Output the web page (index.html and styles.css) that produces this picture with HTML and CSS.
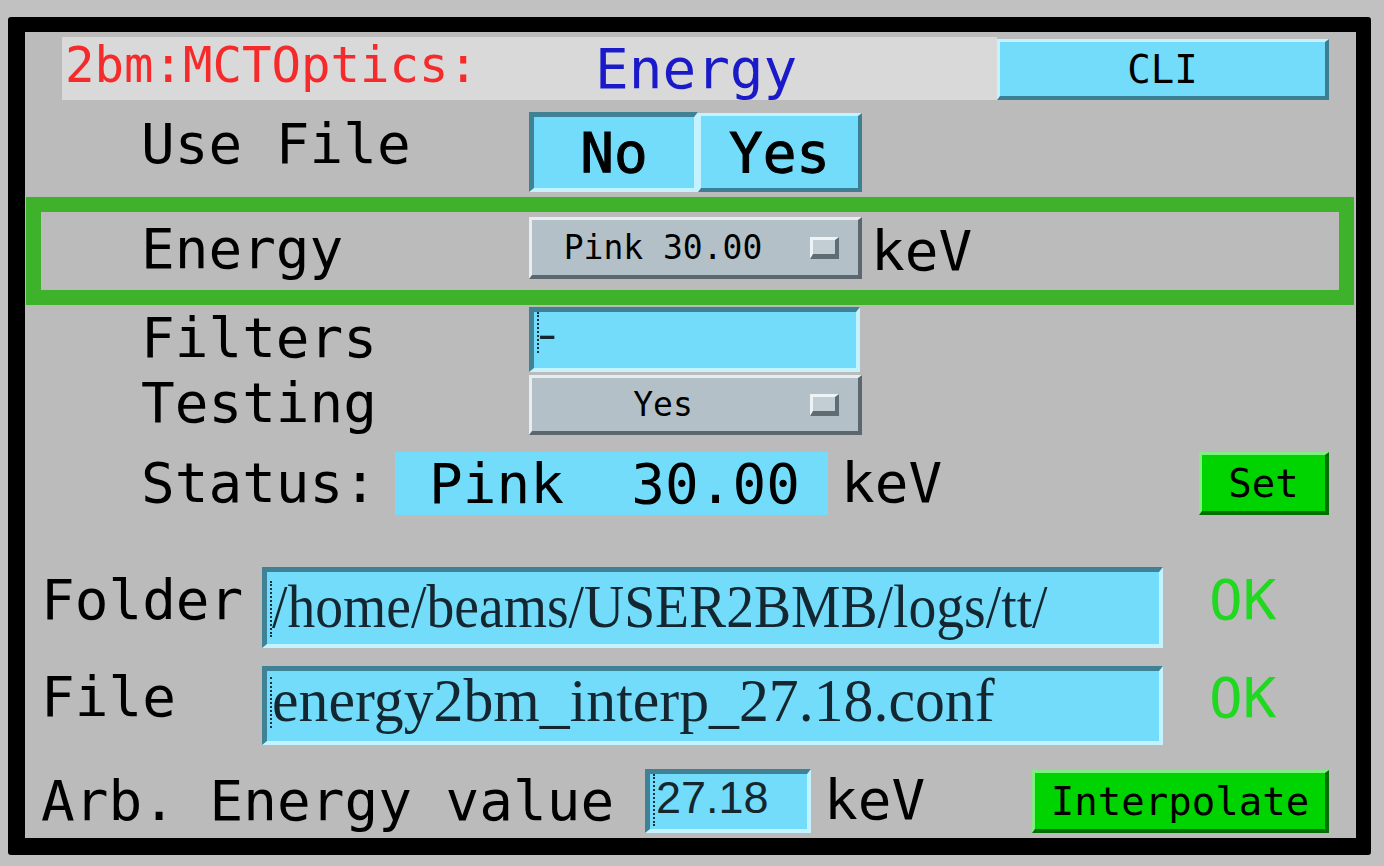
FILE: index.html
```html
<!DOCTYPE html>
<html>
<head>
<meta charset="utf-8">
<title>2bm:MCTOptics: Energy</title>
<link rel="stylesheet" href="styles.css">
</head>
<body>
<div class="frame">
  <div class="row row-title">
    <div class="title-bg">
      <span class="pv-name">2bm:MCTOptics:</span>
      <span class="title">Energy</span>
    </div>
    <div class="btn cyan raised cli">CLI</div>
  </div>

  <div class="row row-usefile">
    <div class="label lbl-col">Use File</div>
    <div class="btn cyan pressed choice no">No</div>
    <div class="btn cyan raised choice yes">Yes</div>
  </div>

  <div class="energy-box">
    <div class="label lbl-col">Energy</div>
    <div class="menu menu-energy"><span class="menu-text">Pink 30.00</span><span class="menu-ind"></span></div>
    <div class="label unit-energy">keV</div>
  </div>

  <div class="row row-filters">
    <div class="label lbl-col">Filters</div>
    <div class="entry cyan pressed entry-filters"><span class="cursor cursor-filters"></span><span class="dash">-</span></div>
  </div>

  <div class="row row-testing">
    <div class="label lbl-col">Testing</div>
    <div class="menu menu-testing"><span class="menu-text">Yes</span><span class="menu-ind"></span></div>
  </div>

  <div class="row row-status">
    <div class="label lbl-status">Status:</div>
    <div class="status-value">Pink  30.00</div>
    <div class="label unit-status">keV</div>
    <div class="btn green raised set">Set</div>
  </div>

  <div class="row row-folder">
    <div class="label lbl-path">Folder</div>
    <div class="entry cyan pressed entry-path"><span class="cursor cursor-folder"></span><span class="path-text folder-text">/home/beams/USER2BMB/logs/tt/</span></div>
    <div class="label ok">OK</div>
  </div>

  <div class="row row-file">
    <div class="label lbl-path">File</div>
    <div class="entry cyan pressed entry-file"><span class="cursor cursor-file"></span><span class="path-text file-text">energy2bm_interp_27.18.conf</span></div>
    <div class="label ok">OK</div>
  </div>

  <div class="row row-arb">
    <div class="label lbl-arb">Arb. Energy value</div>
    <div class="entry cyan pressed entry-arb"><span class="cursor cursor-arb"></span><span class="arb-text">27.18</span></div>
    <div class="label unit-arb">keV</div>
    <div class="btn green raised interp">Interpolate</div>
  </div>
</div>
</body>
</html>
```

FILE: styles.css
```css
html, body {
  margin: 0;
  padding: 0;
}
body {
  width: 1384px;
  height: 866px;
  overflow: hidden;
  background: #c1c1c1;
  font-family: "DejaVu Sans Mono", "Liberation Mono", monospace;
  color: #000;
}
.frame {
  margin: 17px 0 0 8px;
  width: 1331px;
  height: 806px;
  border-style: solid;
  border-color: #000;
  border-width: 15px 15px 17px 17px;
  border-radius: 3px;
  background: #bbbbbb;
}
.row {
  display: flex;
  align-items: flex-start;
}
.label {
  flex: none;
  font-size: 56px;
  line-height: 56px;
  white-space: pre;
}
.lbl-col {
  margin-left: 116px;
  width: 388px;
}

/* title row */
.row-title { height: 73px; }
.title-bg {
  flex: none;
  margin: 5px 0 0 37px;
  width: 935px;
  height: 63px;
  background: #d9d9d9;
  display: flex;
  align-items: flex-start;
}
.pv-name {
  flex: none;
  width: 530px;
  margin: 4px 0 0 3px;
  font-size: 49px;
  line-height: 49px;
  color: #f52a2a;
  white-space: pre;
}
.title {
  margin-top: 4px;
  font-size: 56px;
  line-height: 56px;
  color: #1a1ac8;
}

/* buttons */
.btn {
  flex: none;
  box-sizing: border-box;
  display: flex;
  align-items: center;
  justify-content: center;
  white-space: pre;
}
.cyan { background: #73dcfa; }
.raised.cyan {
  border-style: solid;
  border-width: 3px 4px 4px 3px;
  border-color: #c4f2ff #3d7f92 #3d7f92 #c4f2ff;
}
.pressed.cyan {
  border-style: solid;
  border-width: 5px 4px 4px 5px;
  border-color: #3f8296 #c4f2ff #c4f2ff #3f8296;
}
.green { background: #00d400; }
.raised.green {
  border-style: solid;
  border-width: 3px 4px 4px 3px;
  border-color: #80ee80 #007000 #007000 #80ee80;
}
.cli {
  margin-top: 7px;
  width: 332px;
  height: 61px;
  font-size: 39px;
}

/* use file */
.row-usefile { height: 90px; }
.row-usefile .label { margin-top: 11px; }
.choice {
  font-size: 56px;
  -webkit-text-stroke: 1px #000;
}
.no { margin-top: 7px; width: 169px; height: 80px; }
.yes { margin-top: 8px; width: 164px; height: 79px; }

/* energy box */
.energy-box {
  margin: 2px 0 0 1px;
  width: 1328px;
  height: 108px;
  box-sizing: border-box;
  border: 15px solid #3db22a;
  display: flex;
  align-items: flex-start;
}
.energy-box .lbl-col {
  margin-left: 100px;
  margin-top: 9px;
}
.menu {
  flex: none;
  box-sizing: border-box;
  display: flex;
  align-items: center;
  background: #b3c0c8;
  border-style: solid;
  border-width: 3px 4px 4px 3px;
  border-color: #e6eef2 #5a676e #5a676e #e6eef2;
}
.menu-text {
  flex: 1;
  text-align: center;
  padding-right: 16px;
  font-size: 33px;
  line-height: 33px;
  white-space: pre;
}
.menu-ind {
  flex: none;
  width: 29px;
  height: 22px;
  box-sizing: border-box;
  border-style: solid;
  border-width: 3px 4px 5px 3px;
  border-color: #eef4f6 #5f6c73 #5f6c73 #eef4f6;
  background: #c2ced4;
  margin-right: 19px;
}
.menu-energy { margin-top: 5px; width: 333px; height: 62px; }
.unit-energy { margin-left: 9px; margin-top: 11px; }

/* entries */
.entry {
  flex: none;
  box-sizing: border-box;
  display: flex;
  align-items: flex-start;
  padding-left: 3px;
  color: #142630;
}
.cursor {
  flex: none;
  width: 0;
  border-left: 2px dotted #16323c;
}
.path-text {
  flex: none;
  font-family: "Liberation Serif", "Times New Roman", serif;
  font-size: 62px;
  line-height: 56px;
  white-space: pre;
  transform-origin: 0 0;
}

/* filters */
.row-filters { height: 69px; }
.row-filters .label { margin-top: 5px; }
.entry-filters { margin-top: 2px; width: 331px; height: 65px; }
.cursor-filters { height: 41px; }
.dash {
  flex: none;
  font-family: "Liberation Serif", "Times New Roman", serif;
  font-size: 44px;
  line-height: 44px;
  margin-left: -1px;
  transform: scaleX(1.25);
  transform-origin: 0 0;
}

/* testing */
.row-testing { height: 66px; }
.row-testing .label { margin-top: 1px; }
.menu-testing { margin-top: 1px; width: 333px; height: 60px; }

/* status */
.row-status { height: 80px; }
.lbl-status {
  margin-left: 116px;
  width: 254px;
  margin-top: 15px;
}
.status-value {
  flex: none;
  box-sizing: border-box;
  margin-top: 12px;
  width: 433px;
  height: 63px;
  padding-left: 34px;
  background: #73dcfa;
  font-size: 56px;
  line-height: 63px;
  white-space: pre;
}
.unit-status { margin-left: 13px; margin-top: 15px; }
.set {
  margin-left: auto;
  margin-right: 27px;
  margin-top: 12px;
  width: 130px;
  height: 63px;
  font-size: 39px;
}

/* folder / file */
.lbl-path {
  margin-left: 16px;
  width: 221px;
}
.ok {
  margin-left: 46px;
  color: #1fd81f;
}
.row-folder { height: 135px; }
.row-folder .lbl-path { margin-top: 52px; }
.row-folder .ok { margin-top: 52px; }
.entry-path { margin-top: 47px; width: 901px; height: 81px; }
.cursor-folder { margin-top: 9px; height: 56px; }
.folder-text {
  margin-top: 6px;
  margin-right: -120px;
  transform: scaleX(0.897);
}
.row-file { height: 95px; }
.row-file .lbl-path { margin-top: 14px; }
.row-file .ok { margin-top: 15px; }
.entry-file { margin-top: 11px; width: 901px; height: 79px; }
.cursor-file { margin-top: 6px; height: 51px; }
.file-text {
  margin-top: 1px;
  transform: scaleX(0.964);
}

/* arb energy */
.row-arb { height: 88px; }
.lbl-arb {
  margin-left: 16px;
  width: 604px;
  margin-top: 23px;
}
.entry-arb { margin-top: 19px; width: 166px; height: 64px; }
.cursor-arb { margin-top: 0; height: 52px; }
.arb-text {
  flex: none;
  margin-top: 1px;
  margin-left: 1px;
  font-family: "Liberation Sans", Arial, sans-serif;
  font-size: 45px;
  line-height: 45px;
  white-space: pre;
}
.unit-arb { margin-left: 13px; margin-top: 22px; }
.interp {
  margin-left: auto;
  margin-right: 27px;
  margin-top: 20px;
  width: 297px;
  height: 63px;
  font-size: 39px;
}
```
